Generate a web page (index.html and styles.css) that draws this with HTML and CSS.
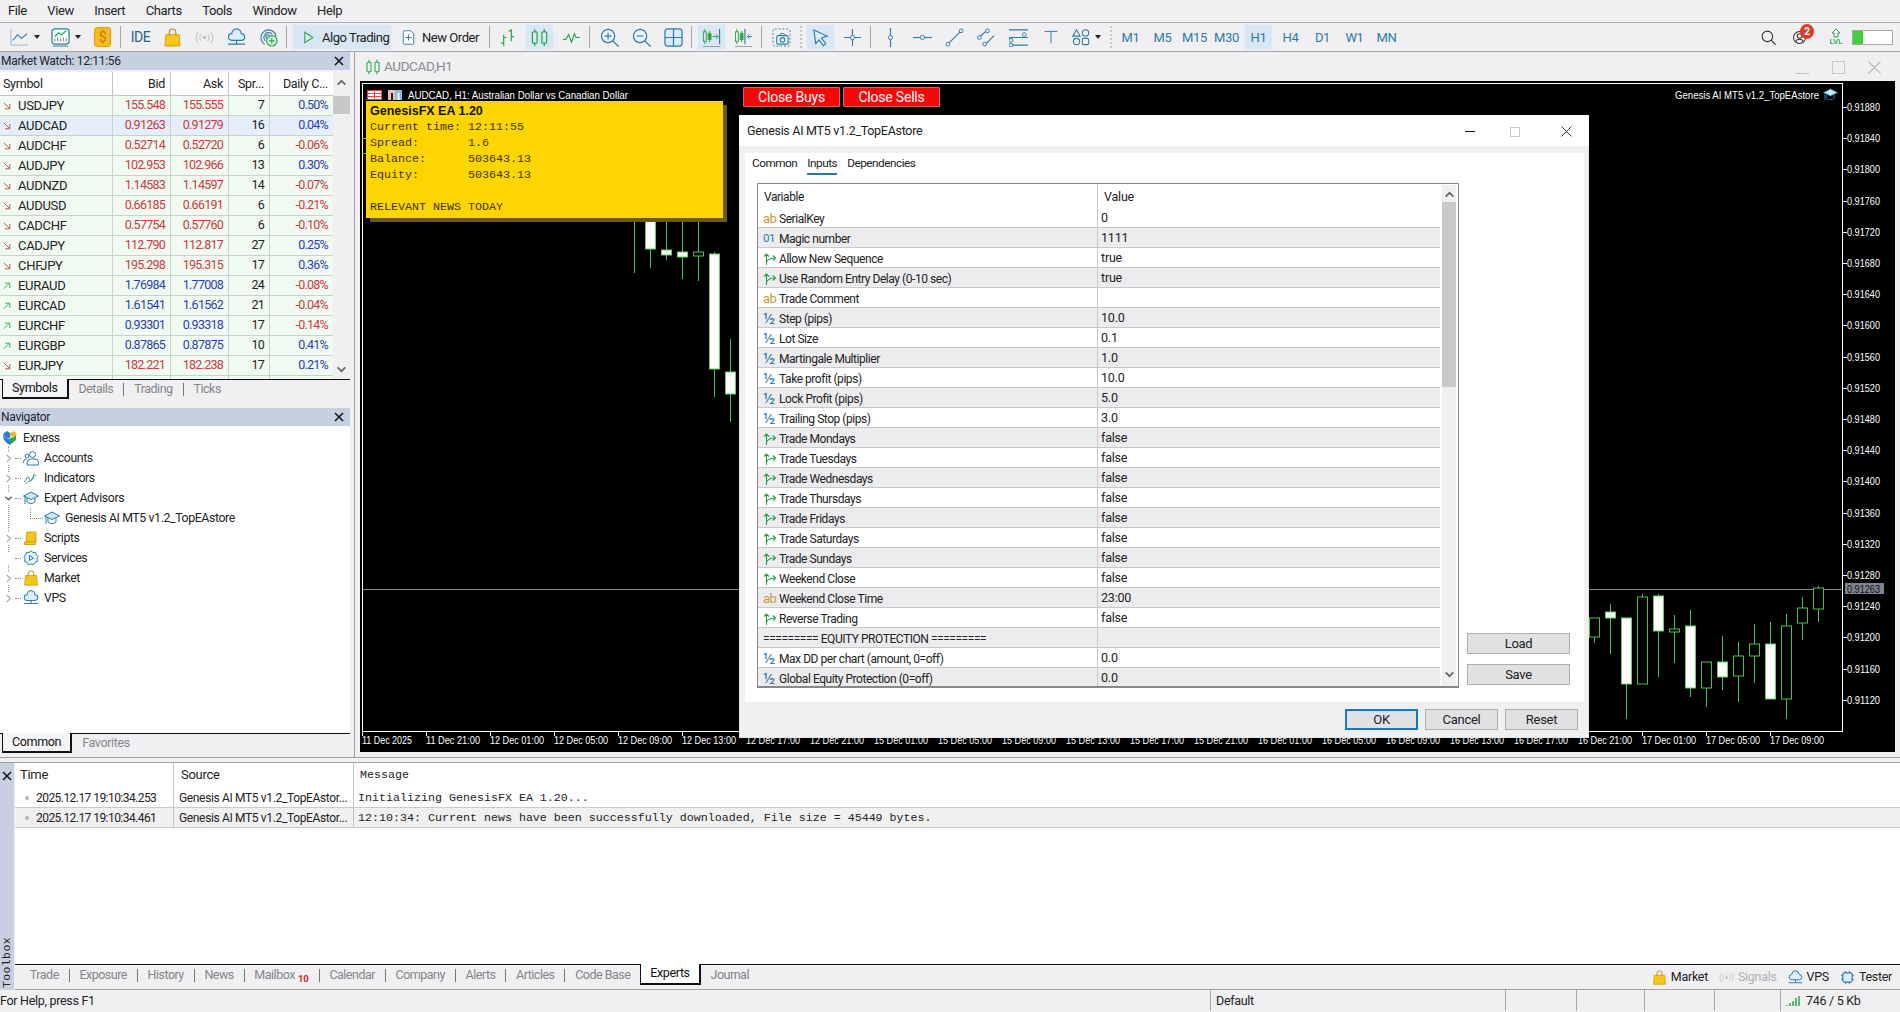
FILE: index.html
```
<!DOCTYPE html>
<html lang="en"><head><meta charset="utf-8"><title>MetaTrader 5</title><link rel="stylesheet" href="styles.css"></head>
<body>
<svg class="defs" xmlns="http://www.w3.org/2000/svg">
<symbol id="i-line" viewBox="0 0 20 20"><path d="M1 1v17h18" fill="none" stroke="#8fb7d0"/><path d="M3 13l5-6 4 4 6-5" fill="none" stroke="#3a86b0" stroke-width="1.2"/></symbol>
<symbol id="i-chart" viewBox="0 0 20 20"><rect x="1" y="1" width="18" height="16" rx="3" fill="#f4fafc" stroke="#2c7f9c" stroke-width="1.3"/><path d="M4 9l4-4 3 2 5-4" fill="none" stroke="#2aa84a" stroke-width="1.3"/><path d="M4 14v-3M7 14v-4M10 14v-3M13 14v-4M16 14v-3" stroke="#777"/><path d="M2 19h16" stroke="#2c7f9c"/></symbol>
<symbol id="i-bag" viewBox="0 0 20 20"><path d="M3 7h14l1 12H2z" fill="#f6c619" stroke="#d89f12"/><path d="M6.5 8V4.500a3.500 3.500 0 0 1 7 0V8" fill="none" stroke="#b98a16" stroke-width="1.2"/></symbol>
<symbol id="i-signal" viewBox="0 0 20 20"><circle cx="10" cy="10" r="1.700" fill="#bbb"/><path d="M6.500 6.500a5 5 0 0 0 0 7M13.500 6.500a5 5 0 0 1 0 7M3.500 4a9 9 0 0 0 0 12M16.500 4a9 9 0 0 1 0 12" fill="none" stroke="#bdbdbd"/></symbol>
<symbol id="i-cloud" viewBox="0 0 20 20"><path d="M5 13a3.500 3.500 0 0 1 0-7 5 5 0 0 1 10 0 3.500 3.500 0 0 1 0 7z" fill="#dcecf8" stroke="#2f7ba6" stroke-width="1.300"/><path d="M1 17h18M10 13v4" stroke="#2f7ba6" stroke-width="1.300"/></symbol>
<symbol id="i-globe" viewBox="0 0 20 20"><path d="M6 17A8 8 0 1 1 18 9M6.500 13.500A5 5 0 1 1 14 6.500M8.500 11a2 2 0 1 1 2.500-2.500" fill="none" stroke="#2f7ba6" stroke-width="1.200"/><circle cx="13.500" cy="13.500" r="5.500" fill="#d8f3dd" stroke="#2aa84a" stroke-width="1.200"/><path d="M13.500 10.500v6M10.500 13.500h6" stroke="#2aa84a" stroke-width="1.200"/></symbol>
<symbol id="i-play" viewBox="0 0 20 20"><path d="M5 3l11 7-11 7z" fill="none" stroke="#2aa84a" stroke-width="1.400"/></symbol>
<symbol id="i-order" viewBox="0 0 20 20"><path d="M5 1h8l4 4v12a2 2 0 0 1-2 2H5a2 2 0 0 1-2-2V3a2 2 0 0 1 2-2z" fill="#fff" stroke="#2f7ba6" stroke-width="1.200"/><path d="M10 6v8M6 10h8" stroke="#2f7ba6" stroke-width="1.300"/></symbol>
<symbol id="i-bars" viewBox="0 0 20 20"><path d="M6 7v12M3 16h3M6 10h3M14 1v13M11 3h3M14 9h3" fill="none" stroke="#2aa84a" stroke-width="1.300"/></symbol>
<symbol id="i-candle" viewBox="0 0 20 20"><path d="M5 1v3M5 16v3M15 1v3M15 16v3" stroke="#2aa84a" stroke-width="1.300"/><rect x="2.500" y="4" width="5" height="12" rx="1" fill="none" stroke="#2aa84a" stroke-width="1.300"/><rect x="12.500" y="4" width="5" height="12" rx="1" fill="none" stroke="#2aa84a" stroke-width="1.300"/></symbol>
<symbol id="i-wave" viewBox="0 0 20 20"><path d="M1 12h3l3-5 3 8 3-9 2 4h4" fill="none" stroke="#2aa84a" stroke-width="1.200"/></symbol>
<symbol id="i-zin" viewBox="0 0 20 20"><circle cx="8.500" cy="8.500" r="7" fill="#eaf4fb" stroke="#2f7ba6" stroke-width="1.300"/><path d="M13.500 13.500l6 6" stroke="#2f7ba6" stroke-width="1.300"/><path d="M8.500 5v7M5 8.500h7" stroke="#2f7ba6" stroke-width="1.200"/></symbol>
<symbol id="i-zout" viewBox="0 0 20 20"><circle cx="8.500" cy="8.500" r="7" fill="#eaf4fb" stroke="#2f7ba6" stroke-width="1.300"/><path d="M13.500 13.500l6 6" stroke="#2f7ba6" stroke-width="1.300"/><path d="M5 8.500h7" stroke="#2f7ba6" stroke-width="1.200"/></symbol>
<symbol id="i-grid" viewBox="0 0 20 20"><rect x="1" y="1" width="18" height="18" rx="3" fill="#dcecf8" stroke="#2f7ba6" stroke-width="1.300"/><path d="M10 1v18M1 10h18" stroke="#2f7ba6" stroke-width="1.300"/></symbol>
<symbol id="i-ascroll" viewBox="0 0 20 20"><path d="M3 1v3M3 14v3M8 3v3M8 12v3" stroke="#2aa84a"/><rect x="1.500" y="4" width="3" height="10" fill="none" stroke="#2aa84a"/><rect x="6.500" y="6" width="3" height="6" fill="#2aa84a" stroke="#2aa84a"/><path d="M11 9h6M14.500 6.500l2.500 2.500-2.500 2.500" fill="none" stroke="#2aa84a"/><path d="M18.500 1v16" stroke="#2f7ba6" stroke-width="1.200"/><path d="M1 19.500h18" stroke="#999"/></symbol>
<symbol id="i-shift" viewBox="0 0 20 20"><path d="M3 1v3M3 14v3M8 3v3M8 12v3" stroke="#2aa84a"/><rect x="1.500" y="4" width="3" height="10" fill="none" stroke="#2aa84a"/><rect x="6.500" y="6" width="3" height="6" fill="#2aa84a" stroke="#2aa84a"/><path d="M11.500 1v16" stroke="#2f7ba6" stroke-width="1.200"/><path d="M19 9h-5M16.500 6.500L14 9l2.500 2.500" fill="none" stroke="#2f7ba6"/><path d="M1 19.500h18" stroke="#999"/></symbol>
<symbol id="i-camera" viewBox="0 0 20 20"><rect x="1" y="1" width="18" height="18" rx="2" fill="none" stroke="#2f7ba6" stroke-dasharray="2 2"/><rect x="5" y="8" width="12" height="9" rx="1.500" fill="#eaf4fb" stroke="#2f7ba6" stroke-width="1.200"/><path d="M8 8l1-2h4l1 2" fill="none" stroke="#2f7ba6"/><circle cx="11" cy="12.500" r="2.300" fill="none" stroke="#2f7ba6" stroke-width="1.200"/></symbol>
<symbol id="i-cursor" viewBox="0 0 20 20"><path d="M3 2l14 6.500-6 2 4.500 6-2.500 2-4.500-6-3.500 4z" fill="#dcecf8" stroke="#2f7ba6" stroke-width="1.200"/></symbol>
<symbol id="i-cross" viewBox="0 0 20 20"><path d="M10 1v18M1 10h18" stroke="#2f7ba6" stroke-width="1.200"/><circle cx="10" cy="10" r="2.200" fill="#f0f0f3" stroke="#2f7ba6"/></symbol>
<symbol id="i-vline" viewBox="0 0 20 20"><path d="M10 0v20" stroke="#2f7ba6" stroke-width="1.200"/><circle cx="10" cy="10" r="2.200" fill="#f0f0f3" stroke="#2f7ba6"/></symbol>
<symbol id="i-hline" viewBox="0 0 20 20"><path d="M0 10h20" stroke="#2f7ba6" stroke-width="1.200"/><circle cx="10" cy="10" r="2.200" fill="#f0f0f3" stroke="#2f7ba6"/></symbol>
<symbol id="i-trend" viewBox="0 0 20 20"><path d="M3 17L17 3" stroke="#2f7ba6" stroke-width="1.200"/><circle cx="3" cy="17" r="2" fill="#f0f0f3" stroke="#2f7ba6"/><circle cx="17" cy="3" r="2" fill="#f0f0f3" stroke="#2f7ba6"/></symbol>
<symbol id="i-channel" viewBox="0 0 20 20"><path d="M2 10L11 2M8 18L18 8" stroke="#2f7ba6" stroke-width="1.200"/><circle cx="11" cy="3" r="2" fill="#f0f0f3" stroke="#2f7ba6"/><circle cx="2.500" cy="10" r="2" fill="#f0f0f3" stroke="#2f7ba6"/><circle cx="8" cy="17" r="2" fill="#f0f0f3" stroke="#2f7ba6"/></symbol>
<symbol id="i-fibo" viewBox="0 0 20 20"><path d="M0 2h20M0 10h20M0 18h20" stroke="#2f7ba6" stroke-width="1.200"/><circle cx="16" cy="7" r="2" fill="#f0f0f3" stroke="#2f7ba6"/><circle cx="2" cy="13" r="2" fill="#f0f0f3" stroke="#2f7ba6"/><circle cx="2" cy="18" r="2" fill="#f0f0f3" stroke="#2f7ba6"/></symbol>
<symbol id="i-t" viewBox="0 0 20 20"><path d="M2 3h16M10 3v15" stroke="#2f7ba6" stroke-width="1.200"/></symbol>
<symbol id="i-shapes" viewBox="0 0 20 20"><path d="M5 2l4 7H1z" fill="none" stroke="#2f7ba6" stroke-width="1.200"/><circle cx="15" cy="5.500" r="3.500" fill="none" stroke="#2f7ba6" stroke-width="1.200"/><circle cx="5" cy="15" r="3.500" fill="none" stroke="#2f7ba6" stroke-width="1.200"/><rect x="11.500" y="11.500" width="7" height="7" rx="1.500" fill="none" stroke="#2f7ba6" stroke-width="1.200"/></symbol>
<symbol id="i-search" viewBox="0 0 20 20"><circle cx="8.500" cy="8.500" r="7" fill="none" stroke="#333" stroke-width="1.500"/><path d="M13.500 13.500l6 6" stroke="#333" stroke-width="1.500"/></symbol>
<symbol id="i-acct" viewBox="0 0 20 20"><circle cx="10" cy="10" r="8" fill="none" stroke="#333" stroke-width="1.400"/><circle cx="10" cy="8" r="3" fill="none" stroke="#333" stroke-width="1.400"/><path d="M4.500 16a6 6 0 0 1 11 0" fill="none" stroke="#333" stroke-width="1.400"/></symbol>
<symbol id="i-close" viewBox="0 0 10 10"><path d="M1 1l8 8M9 1L1 9" stroke="#111" stroke-width="1.500"/></symbol>
<symbol id="i-thin-x" viewBox="0 0 12 12"><path d="M.5.500l11 11M11.500.500l-11 11" stroke="#222"/></symbol>
<symbol id="i-up" viewBox="0 0 10 10"><path d="M1.500 7L5 3.500 8.500 7" fill="none" stroke="#666" stroke-width="1.600"/></symbol>
<symbol id="i-down" viewBox="0 0 10 10"><path d="M1.500 3L5 6.500 8.500 3" fill="none" stroke="#666" stroke-width="1.600"/></symbol>
<symbol id="i-chev" viewBox="0 0 10 10"><path d="M3 1l4 4-4 4" fill="none" stroke="#aaa" stroke-width="1.400"/></symbol>
<symbol id="i-arr-dn" viewBox="0 0 10 10"><path d="M1 1l7 7M8.500 2.500v6h-6" fill="none" stroke="#c0403a" stroke-width="1.100"/></symbol>
<symbol id="i-arr-up" viewBox="0 0 10 10"><path d="M1 8.500l7-7M2.500 1.500h6v6" fill="none" stroke="#2aa84a" stroke-width="1.100"/></symbol>
<symbol id="i-bool" viewBox="0 0 14 14"><path d="M3.500 13V2M1 4.500L3.500 2 6 4.500M3.500 10C5 7 8 6 12.500 6M10 3.500L12.500 6 10 8.500" fill="none" stroke="#27a050" stroke-width="1.100"/></symbol>
<symbol id="i-people" viewBox="0 0 16 16"><circle cx="9.500" cy="4.500" r="3" fill="none" stroke="#2f7ba6"/><path d="M4 15v-2a4 4 0 0 1 4-4h4a3.500 3.500 0 0 1 3.500 3.500V15z" fill="none" stroke="#2f7ba6"/><circle cx="4" cy="6" r="2" fill="none" stroke="#2f7ba6"/><path d="M.5 13v-1a3 3 0 0 1 3-3" fill="none" stroke="#2f7ba6"/></symbol>
<symbol id="i-ind" viewBox="0 0 16 16"><path d="M1 12c2-1 2-5 4-5s1 5 3 4 2-7 4-7" fill="none" stroke="#2aa84a"/><path d="M3 14c2-3 3-2 5-4s3-2 6-6" fill="none" stroke="#2f7ba6" stroke-dasharray="2 1"/></symbol>
<symbol id="i-hat" viewBox="0 0 16 16"><path d="M8 2L15.500 6 8 9.500.5 6z" fill="#cfe5f3" stroke="#2f7ba6"/><path d="M4 8v4c2 2 6 2 8 0V8" fill="none" stroke="#2f7ba6"/><path d="M2 6.500V14" stroke="#2f7ba6"/></symbol>
<symbol id="i-script" viewBox="0 0 16 16"><path d="M4 2h9v10H3z" fill="#f6c619" stroke="#d89f12"/><path d="M1.500 12h11v2.500h-11z" fill="#f6c619" stroke="#d89f12"/></symbol>
<symbol id="i-gear" viewBox="0 0 16 16"><path d="M8 .800l2 1.700 2.600-.200.600 2.500 2 1.700L14 8.800l.4 2.600-2.400 1-1.300 2.200L8 14l-2.700.600L4 12.400l-2.400-1L2 8.800.800 6.500l2-1.700.600-2.500 2.600.200z" fill="#eaf4fb" stroke="#2f7ba6"/><path d="M6.500 5.500l4 2.500-4 2.500z" fill="none" stroke="#2f7ba6"/></symbol>
<symbol id="i-exness" viewBox="0 0 16 16"><path d="M1 4l4-3 3 2v5L4 8z" fill="#2b7bd6"/><path d="M8 3l4-2 3 3-3 3-4-1z" fill="#f5b91d"/><path d="M8 8l4-1 2-2v5l-6 5z" fill="#2ca84a"/><path d="M1 5l3 3 4 1v6c-4-2-7-5-7-10z" fill="#2b7bd6"/></symbol>
<symbol id="i-chip" viewBox="0 0 16 16"><rect x="3" y="3" width="10" height="10" rx="2" fill="#dcecf8" stroke="#2f7ba6" stroke-width="1.300"/><path d="M6 1v2M10 1v2M6 13v2M10 13v2M1 6h2M1 10h2M13 6h2M13 10h2" stroke="#2f7ba6"/></symbol>
</svg>

<nav class="menubar"><span>File</span><span>View</span><span>Insert</span><span>Charts</span><span>Tools</span><span>Window</span><span>Help</span></nav>

<div class="toolbar">
  <div class="group g-start">
    <div class="tool w38"><svg class="ic"><use href="#i-line"/></svg><i class="drop"></i></div>
    <div class="tool w38"><svg class="ic"><use href="#i-chart"/></svg><i class="drop"></i></div>
    <div class="tool"><span class="dollar">$</span></div>
  </div>
  <b class="sep"></b>
  <div class="group">
    <div class="tool ide">IDE</div>
    <div class="tool"><svg class="ic"><use href="#i-bag"/></svg></div>
    <div class="tool"><svg class="ic"><use href="#i-signal"/></svg></div>
    <div class="tool"><svg class="ic"><use href="#i-cloud"/></svg></div>
    <div class="tool"><svg class="ic"><use href="#i-globe"/></svg></div>
  </div>
  <b class="sep"></b>
  <div class="group">
    <div class="tool on wide algo"><svg class="ic s14"><use href="#i-play"/></svg><span>Algo Trading</span></div>
    <div class="tool wide order"><svg class="ic s14"><use href="#i-order"/></svg><span>New Order</span></div>
  </div>
  <b class="sep tight"></b>
  <div class="group">
    <div class="tool"><svg class="ic"><use href="#i-bars"/></svg></div>
    <div class="tool on"><svg class="ic"><use href="#i-candle"/></svg></div>
    <div class="tool"><svg class="ic"><use href="#i-wave"/></svg></div>
  </div>
  <b class="sep"></b>
  <div class="group">
    <div class="tool"><svg class="ic"><use href="#i-zin"/></svg></div>
    <div class="tool"><svg class="ic"><use href="#i-zout"/></svg></div>
    <div class="tool"><svg class="ic"><use href="#i-grid"/></svg></div>
  </div>
  <b class="sep"></b>
  <div class="group">
    <div class="tool on"><svg class="ic"><use href="#i-ascroll"/></svg></div>
    <div class="tool"><svg class="ic"><use href="#i-shift"/></svg></div>
  </div>
  <b class="sep"></b>
  <div class="group">
    <div class="tool"><svg class="ic"><use href="#i-camera"/></svg></div>
  </div>
  <b class="sep dotted"></b>
  <div class="group">
    <div class="tool on"><svg class="ic"><use href="#i-cursor"/></svg></div>
    <div class="tool"><svg class="ic"><use href="#i-cross"/></svg></div>
  </div>
  <b class="sep"></b>
  <div class="group">
    <div class="tool"><svg class="ic"><use href="#i-vline"/></svg></div>
    <div class="tool"><svg class="ic"><use href="#i-hline"/></svg></div>
    <div class="tool"><svg class="ic"><use href="#i-trend"/></svg></div>
    <div class="tool"><svg class="ic"><use href="#i-channel"/></svg></div>
    <div class="tool"><svg class="ic"><use href="#i-fibo"/></svg></div>
    <div class="tool"><svg class="ic s16"><use href="#i-t"/></svg></div>
    <div class="tool w38"><svg class="ic s18"><use href="#i-shapes"/></svg><i class="drop"></i></div>
  </div>
  <b class="sep dotted"></b>
  <div class="group periods">
    <div class="tool">M1</div><div class="tool">M5</div><div class="tool">M15</div><div class="tool">M30</div><div class="tool on">H1</div><div class="tool">H4</div><div class="tool">D1</div><div class="tool">W1</div><div class="tool">MN</div>
  </div>
  <div class="tb-right">
    <svg class="ic s15 srch"><use href="#i-search"/></svg>
    <span class="acct"><svg class="ic s15"><use href="#i-acct"/></svg><em class="badge">2</em></span>
    <span class="lvl"><svg class="lvl-a" viewBox="0 0 10 10"><path d="M5 1l4 4H7v4H3V5H1z" fill="none" stroke="#2aa84a"/></svg><small>LVL</small></span>
    <span class="lvlbar"><i></i></span>
  </div>
</div>

<main class="main">
  <aside class="left">
    <section class="mw">
      <header class="pane-title"><span>Market Watch: 12:11:56</span><svg class="x"><use href="#i-close"/></svg></header>
      <div class="mw-body">
        <div class="mw-table">
          <div class="mrow head"><span class="sym">Symbol</span><span>Bid</span><span>Ask</span><span>Spr...</span><span>Daily C...</span></div>
          <div class="mrow"><span class="sym"><svg class="arr"><use href="#i-arr-dn"/></svg>USDJPY</span><span class="dn">155.548</span><span class="dn">155.555</span><span>7</span><span class="blue">0.50%</span></div>
          <div class="mrow sel"><span class="sym"><svg class="arr"><use href="#i-arr-dn"/></svg>AUDCAD</span><span class="dn">0.91263</span><span class="dn">0.91279</span><span>16</span><span class="blue">0.04%</span></div>
          <div class="mrow"><span class="sym"><svg class="arr"><use href="#i-arr-dn"/></svg>AUDCHF</span><span class="dn">0.52714</span><span class="dn">0.52720</span><span>6</span><span class="dn">-0.06%</span></div>
          <div class="mrow"><span class="sym"><svg class="arr"><use href="#i-arr-dn"/></svg>AUDJPY</span><span class="dn">102.953</span><span class="dn">102.966</span><span>13</span><span class="blue">0.30%</span></div>
          <div class="mrow"><span class="sym"><svg class="arr"><use href="#i-arr-dn"/></svg>AUDNZD</span><span class="dn">1.14583</span><span class="dn">1.14597</span><span>14</span><span class="dn">-0.07%</span></div>
          <div class="mrow"><span class="sym"><svg class="arr"><use href="#i-arr-dn"/></svg>AUDUSD</span><span class="dn">0.66185</span><span class="dn">0.66191</span><span>6</span><span class="dn">-0.21%</span></div>
          <div class="mrow"><span class="sym"><svg class="arr"><use href="#i-arr-dn"/></svg>CADCHF</span><span class="dn">0.57754</span><span class="dn">0.57760</span><span>6</span><span class="dn">-0.10%</span></div>
          <div class="mrow"><span class="sym"><svg class="arr"><use href="#i-arr-dn"/></svg>CADJPY</span><span class="dn">112.790</span><span class="dn">112.817</span><span>27</span><span class="blue">0.25%</span></div>
          <div class="mrow"><span class="sym"><svg class="arr"><use href="#i-arr-dn"/></svg>CHFJPY</span><span class="dn">195.298</span><span class="dn">195.315</span><span>17</span><span class="blue">0.36%</span></div>
          <div class="mrow"><span class="sym"><svg class="arr"><use href="#i-arr-up"/></svg>EURAUD</span><span class="blue">1.76984</span><span class="blue">1.77008</span><span>24</span><span class="dn">-0.08%</span></div>
          <div class="mrow"><span class="sym"><svg class="arr"><use href="#i-arr-up"/></svg>EURCAD</span><span class="blue">1.61541</span><span class="blue">1.61562</span><span>21</span><span class="dn">-0.04%</span></div>
          <div class="mrow"><span class="sym"><svg class="arr"><use href="#i-arr-up"/></svg>EURCHF</span><span class="blue">0.93301</span><span class="blue">0.93318</span><span>17</span><span class="dn">-0.14%</span></div>
          <div class="mrow"><span class="sym"><svg class="arr"><use href="#i-arr-up"/></svg>EURGBP</span><span class="blue">0.87865</span><span class="blue">0.87875</span><span>10</span><span class="blue">0.41%</span></div>
          <div class="mrow"><span class="sym"><svg class="arr"><use href="#i-arr-dn"/></svg>EURJPY</span><span class="dn">182.221</span><span class="dn">182.238</span><span>17</span><span class="blue">0.21%</span></div>
          <div class="mrow tail"><span></span><span></span><span></span><span></span><span></span></div>
        </div>
        <div class="mw-scroll"><svg class="chev"><use href="#i-up"/></svg><i class="thumb"></i><svg class="chev end"><use href="#i-down"/></svg></div>
      </div>
      <div class="tabs"><span class="tab on">Symbols</span><span class="tab bar">Details</span><span class="tab bar">Trading</span><span class="tab">Ticks</span></div>
    </section>
    <section class="nav">
      <header class="pane-title"><span>Navigator</span><svg class="x"><use href="#i-close"/></svg></header>
      <ul class="tree">
        <li class="root"><svg class="ni"><use href="#i-exness"/></svg>Exness</li>
        <li><svg class="tw"><use href="#i-chev"/></svg><i class="dots"></i><svg class="ni"><use href="#i-people"/></svg>Accounts</li>
        <li><svg class="tw"><use href="#i-chev"/></svg><i class="dots"></i><svg class="ni"><use href="#i-ind"/></svg>Indicators</li>
        <li><svg class="tw"><use href="#i-down"/></svg><i class="dots"></i><svg class="ni"><use href="#i-hat"/></svg>Expert Advisors</li>
        <li class="child"><i class="elbow"></i><svg class="ni"><use href="#i-hat"/></svg>Genesis AI MT5 v1.2_TopEAstore</li>
        <li><svg class="tw"><use href="#i-chev"/></svg><i class="dots"></i><svg class="ni"><use href="#i-script"/></svg>Scripts</li>
        <li><span class="tw"></span><i class="dots"></i><svg class="ni"><use href="#i-gear"/></svg>Services</li>
        <li><svg class="tw"><use href="#i-chev"/></svg><i class="dots"></i><svg class="ni"><use href="#i-bag"/></svg>Market</li>
        <li><svg class="tw"><use href="#i-chev"/></svg><i class="dots"></i><svg class="ni"><use href="#i-cloud"/></svg>VPS</li>
      </ul>
      <div class="tabs"><span class="tab on">Common</span><span class="tab">Favorites</span></div>
    </section>
  </aside>

  <section class="mdi">
    <header class="mdi-tab">
      <svg class="ic s16"><use href="#i-candle"/></svg><span class="mdi-name">AUDCAD,H1</span>
      <div class="winbtns"><i class="w-min"></i><i class="w-max"></i><svg class="w-x"><use href="#i-thin-x"/></svg></div>
    </header>
    <div class="chart">
      <svg class="plot" width="1535" height="671" viewBox="360 81 1535 671">
        <rect class="frame" x="362.500" y="83.500" width="1480" height="648"/>
        <path class="priceline" d="M363 589.500H1843"/>
        <path class="wick" d="M410.500 218v4M362 138.500h4M362 153.500h4M634.500 218V273M650.500 218V268M666.500 218V260M682.500 218V279M698.500 218V281M714.500 252V397M730.500 339V422M1594.500 618V643M1610.500 604V654M1626.500 684V719M1642.500 594V597M1658.500 594V677M1674.500 615V663M1690.500 610V697M1706.500 688V707M1722.500 636V690M1738.500 642V702M1754.500 624V683M1770.500 622V644M1786.500 614V719M1802.500 597V640M1818.500 586V622"/>
        <g class="bear">
          <rect x="645.500" y="218" width="10" height="31"/><rect x="661.500" y="250" width="10" height="5"/><rect x="677.500" y="252" width="10" height="5"/><rect x="709.500" y="254" width="10" height="115"/><rect x="725.500" y="372" width="10" height="22"/>
          <rect x="1605.500" y="612" width="10" height="6"/><rect x="1621.500" y="618" width="10" height="66"/><rect x="1653.500" y="596" width="10" height="35"/><rect x="1685.500" y="626" width="10" height="62"/><rect x="1717.500" y="662" width="10" height="15"/><rect x="1765.500" y="644" width="10" height="55"/>
        </g>
        <g class="bull">
          <rect x="693.500" y="252" width="10" height="4"/><rect x="1589.500" y="618" width="10" height="19"/><rect x="1637.500" y="597" width="10" height="87"/><rect x="1669.500" y="629" width="10" height="3"/><rect x="1701.500" y="662" width="10" height="26"/><rect x="1733.500" y="656" width="10" height="20"/><rect x="1749.500" y="644" width="10" height="12"/><rect x="1781.500" y="626" width="10" height="73"/><rect x="1797.500" y="608" width="10" height="15"/><rect x="1813.500" y="588" width="10" height="21"/>
        </g>
        <path class="tick" d="M1843 107.500h4M1843 138.500h4M1843 169.500h4M1843 201.500h4M1843 232.500h4M1843 263.500h4M1843 294.500h4M1843 325.500h4M1843 357.500h4M1843 388.500h4M1843 419.500h4M1843 450.500h4M1843 481.500h4M1843 513.500h4M1843 544.500h4M1843 575.500h4M1843 606.500h4M1843 637.500h4M1843 669.500h4M1843 700.500h4"/>
        <path class="tick" d="M362.500 731v5M426.500 731v5M490.500 731v5M554.500 731v5M618.500 731v5M682.500 731v5M746.500 731v5M810.500 731v5M874.500 731v5M938.500 731v5M1002.500 731v5M1066.500 731v5M1130.500 731v5M1194.500 731v5M1258.500 731v5M1322.500 731v5M1386.500 731v5M1450.500 731v5M1514.500 731v5M1578.500 731v5M1642.500 731v5M1706.500 731v5M1770.500 731v5"/>
        <g class="lbl">
          <text x="1847" y="111" textLength="33" lengthAdjust="spacingAndGlyphs">0.91880</text><text x="1847" y="142" textLength="33" lengthAdjust="spacingAndGlyphs">0.91840</text><text x="1847" y="173" textLength="33" lengthAdjust="spacingAndGlyphs">0.91800</text><text x="1847" y="205" textLength="33" lengthAdjust="spacingAndGlyphs">0.91760</text><text x="1847" y="236" textLength="33" lengthAdjust="spacingAndGlyphs">0.91720</text><text x="1847" y="267" textLength="33" lengthAdjust="spacingAndGlyphs">0.91680</text><text x="1847" y="298" textLength="33" lengthAdjust="spacingAndGlyphs">0.91640</text><text x="1847" y="329" textLength="33" lengthAdjust="spacingAndGlyphs">0.91600</text><text x="1847" y="361" textLength="33" lengthAdjust="spacingAndGlyphs">0.91560</text><text x="1847" y="392" textLength="33" lengthAdjust="spacingAndGlyphs">0.91520</text><text x="1847" y="423" textLength="33" lengthAdjust="spacingAndGlyphs">0.91480</text><text x="1847" y="454" textLength="33" lengthAdjust="spacingAndGlyphs">0.91440</text><text x="1847" y="485" textLength="33" lengthAdjust="spacingAndGlyphs">0.91400</text><text x="1847" y="517" textLength="33" lengthAdjust="spacingAndGlyphs">0.91360</text><text x="1847" y="548" textLength="33" lengthAdjust="spacingAndGlyphs">0.91320</text><text x="1847" y="579" textLength="33" lengthAdjust="spacingAndGlyphs">0.91280</text><text x="1847" y="610" textLength="33" lengthAdjust="spacingAndGlyphs">0.91240</text><text x="1847" y="641" textLength="33" lengthAdjust="spacingAndGlyphs">0.91200</text><text x="1847" y="673" textLength="33" lengthAdjust="spacingAndGlyphs">0.91160</text><text x="1847" y="704" textLength="33" lengthAdjust="spacingAndGlyphs">0.91120</text>
        </g>
        <rect class="pricebox" x="1845" y="583" width="39" height="11"/>
        <text class="lbl-cur" x="1847" y="593" textLength="33" lengthAdjust="spacingAndGlyphs">0.91263</text>
        <g class="lbl">
          <text x="362" y="744" textLength="50" lengthAdjust="spacingAndGlyphs">11 Dec 2025</text><text x="426" y="744" textLength="54" lengthAdjust="spacingAndGlyphs">11 Dec 21:00</text><text x="490" y="744" textLength="54" lengthAdjust="spacingAndGlyphs">12 Dec 01:00</text><text x="554" y="744" textLength="54" lengthAdjust="spacingAndGlyphs">12 Dec 05:00</text><text x="618" y="744" textLength="54" lengthAdjust="spacingAndGlyphs">12 Dec 09:00</text><text x="682" y="744" textLength="54" lengthAdjust="spacingAndGlyphs">12 Dec 13:00</text><text x="746" y="744" textLength="54" lengthAdjust="spacingAndGlyphs">12 Dec 17:00</text><text x="810" y="744" textLength="54" lengthAdjust="spacingAndGlyphs">12 Dec 21:00</text><text x="874" y="744" textLength="54" lengthAdjust="spacingAndGlyphs">15 Dec 01:00</text><text x="938" y="744" textLength="54" lengthAdjust="spacingAndGlyphs">15 Dec 05:00</text><text x="1002" y="744" textLength="54" lengthAdjust="spacingAndGlyphs">15 Dec 09:00</text><text x="1066" y="744" textLength="54" lengthAdjust="spacingAndGlyphs">15 Dec 13:00</text><text x="1130" y="744" textLength="54" lengthAdjust="spacingAndGlyphs">15 Dec 17:00</text><text x="1194" y="744" textLength="54" lengthAdjust="spacingAndGlyphs">15 Dec 21:00</text><text x="1258" y="744" textLength="54" lengthAdjust="spacingAndGlyphs">16 Dec 01:00</text><text x="1322" y="744" textLength="54" lengthAdjust="spacingAndGlyphs">16 Dec 05:00</text><text x="1386" y="744" textLength="54" lengthAdjust="spacingAndGlyphs">16 Dec 09:00</text><text x="1450" y="744" textLength="54" lengthAdjust="spacingAndGlyphs">16 Dec 13:00</text><text x="1514" y="744" textLength="54" lengthAdjust="spacingAndGlyphs">16 Dec 17:00</text><text x="1578" y="744" textLength="54" lengthAdjust="spacingAndGlyphs">16 Dec 21:00</text><text x="1642" y="744" textLength="54" lengthAdjust="spacingAndGlyphs">17 Dec 01:00</text><text x="1706" y="744" textLength="54" lengthAdjust="spacingAndGlyphs">17 Dec 05:00</text><text x="1770" y="744" textLength="54" lengthAdjust="spacingAndGlyphs">17 Dec 09:00</text>
          <text x="408" y="99" textLength="220" lengthAdjust="spacingAndGlyphs">AUDCAD, H1:  Australian Dollar vs Canadian Dollar</text>
          <text x="1675" y="99" textLength="144" lengthAdjust="spacingAndGlyphs">Genesis AI MT5 v1.2_TopEAstore</text>
        </g>
        <g class="legend">
          <rect x="367.500" y="90.500" width="14" height="9" fill="#fff" stroke="#e04848"/><path d="M367 93.500h15M367 96.500h15" stroke="#e04848"/><path d="M374.500 90v10" stroke="#e04848"/>
          <rect x="388" y="90" width="7" height="10" fill="#f3b8b8"/><rect x="395" y="90" width="7" height="10" fill="#7cc0ea"/><rect x="391" y="93" width="2" height="7" fill="#222"/><rect x="397.500" y="93" width="2" height="7" fill="#fff"/>
        </g>
        <svg x="1823" y="87" width="15" height="15" viewBox="0 0 16 16"><use href="#i-hat"/></svg>
      </svg>

      <aside class="ea-panel">
        <div class="ea-title">GenesisFX EA 1.20</div>
        <div class="ea-line">Current time: 12:11:55</div>
        <div class="ea-line">Spread:       1.6</div>
        <div class="ea-line">Balance:      503643.13</div>
        <div class="ea-line">Equity:       503643.13</div>
        <div class="ea-line">&nbsp;</div>
        <div class="ea-line">RELEVANT NEWS TODAY</div>
      </aside>
      <div class="closers"><button class="red">Close Buys</button><button class="red">Close Sells</button></div>

      <div class="dialog">
        <header class="dlg-title"><span>Genesis AI MT5 v1.2_TopEAstore</span>
          <div class="dlg-win"><i class="d-min"></i><i class="d-max"></i><svg class="d-x"><use href="#i-thin-x"/></svg></div>
        </header>
        <div class="dlg-panel">
          <div class="dlg-tabs"><span>Common</span><span class="cur">Inputs</span><span>Dependencies</span></div>
          <div class="dlg-body">
            <div class="grid">
              <div class="grid-rows">
                <div class="grow ghead"><span>Variable</span><span>Value</span></div>
                <div class="grow"><span><em class="t-s">ab</em>SerialKey</span><span>0</span></div>
                <div class="grow"><span><em class="t-i">01</em>Magic number</span><span>1111</span></div>
                <div class="grow"><span><svg class="t-b"><use href="#i-bool"/></svg>Allow New Sequence</span><span>true</span></div>
                <div class="grow"><span><svg class="t-b"><use href="#i-bool"/></svg>Use Random Entry Delay (0-10 sec)</span><span>true</span></div>
                <div class="grow"><span><em class="t-s">ab</em>Trade Comment</span><span></span></div>
                <div class="grow"><span><em class="t-d">½</em>Step (pips)</span><span>10.0</span></div>
                <div class="grow"><span><em class="t-d">½</em>Lot Size</span><span>0.1</span></div>
                <div class="grow"><span><em class="t-d">½</em>Martingale Multiplier</span><span>1.0</span></div>
                <div class="grow"><span><em class="t-d">½</em>Take profit (pips)</span><span>10.0</span></div>
                <div class="grow"><span><em class="t-d">½</em>Lock Profit (pips)</span><span>5.0</span></div>
                <div class="grow"><span><em class="t-d">½</em>Trailing Stop (pips)</span><span>3.0</span></div>
                <div class="grow"><span><svg class="t-b"><use href="#i-bool"/></svg>Trade Mondays</span><span>false</span></div>
                <div class="grow"><span><svg class="t-b"><use href="#i-bool"/></svg>Trade Tuesdays</span><span>false</span></div>
                <div class="grow"><span><svg class="t-b"><use href="#i-bool"/></svg>Trade Wednesdays</span><span>false</span></div>
                <div class="grow"><span><svg class="t-b"><use href="#i-bool"/></svg>Trade Thursdays</span><span>false</span></div>
                <div class="grow"><span><svg class="t-b"><use href="#i-bool"/></svg>Trade Fridays</span><span>false</span></div>
                <div class="grow"><span><svg class="t-b"><use href="#i-bool"/></svg>Trade Saturdays</span><span>false</span></div>
                <div class="grow"><span><svg class="t-b"><use href="#i-bool"/></svg>Trade Sundays</span><span>false</span></div>
                <div class="grow"><span><svg class="t-b"><use href="#i-bool"/></svg>Weekend Close</span><span>false</span></div>
                <div class="grow"><span><em class="t-s">ab</em>Weekend Close Time</span><span>23:00</span></div>
                <div class="grow"><span><svg class="t-b"><use href="#i-bool"/></svg>Reverse Trading</span><span>false</span></div>
                <div class="grow plain"><span>========= EQUITY PROTECTION =========</span><span></span></div>
                <div class="grow"><span><em class="t-d">½</em>Max DD per chart (amount, 0=off)</span><span>0.0</span></div>
                <div class="grow"><span><em class="t-d">½</em>Global Equity Protection (0=off)</span><span>0.0</span></div>
              </div>
              <div class="grid-scroll"><svg class="chev"><use href="#i-up"/></svg><i class="gthumb"></i><svg class="chev end"><use href="#i-down"/></svg></div>
            </div>
            <div class="side-btns"><button class="btn">Load</button><button class="btn">Save</button></div>
          </div>
        </div>
        <footer class="dlg-foot"><button class="btn ok">OK</button><button class="btn">Cancel</button><button class="btn">Reset</button></footer>
      </div>
    </div>
  </section>
</main>

<section class="toolbox">
  <div class="tb-strip"><svg class="x"><use href="#i-close"/></svg><span class="tb-label">Toolbox</span></div>
  <div class="tb-main">
    <div class="log">
      <div class="lrow lhead"><span class="c-time">Time</span><span class="c-src">Source</span><span class="c-msg">Message</span></div>
      <div class="lrow"><span class="c-time"><i class="dot"></i>2025.12.17 19:10:34.253</span><span class="c-src">Genesis AI MT5 v1.2_TopEAstor...</span><span class="c-msg">Initializing GenesisFX EA 1.20...</span></div>
      <div class="lrow alt"><span class="c-time"><i class="dot"></i>2025.12.17 19:10:34.461</span><span class="c-src">Genesis AI MT5 v1.2_TopEAstor...</span><span class="c-msg">12:10:34: Current news have been successfully downloaded, File size = 45449 bytes.</span></div>
    </div>
    <div class="tabs wide-tabs">
      <span class="tab bar">Trade</span><span class="tab bar">Exposure</span><span class="tab bar">History</span><span class="tab bar">News</span><span class="tab bar mail">Mailbox<sub>10</sub></span><span class="tab bar">Calendar</span><span class="tab bar">Company</span><span class="tab bar">Alerts</span><span class="tab bar">Articles</span><span class="tab">Code Base</span><span class="tab on">Experts</span><span class="tab">Journal</span>
      <div class="services">
        <span><svg class="si"><use href="#i-bag"/></svg>Market</span>
        <span class="off"><svg class="si"><use href="#i-signal"/></svg>Signals</span>
        <span><svg class="si"><use href="#i-cloud"/></svg>VPS</span>
        <span><svg class="si"><use href="#i-chip"/></svg>Tester</span>
      </div>
    </div>
  </div>
</section>

<footer class="status">
  <span class="st help">For Help, press F1</span>
  <span class="st st-default">Default</span>
  <span class="st st-a"></span><span class="st st-b"></span><span class="st st-c"></span><span class="st st-d"></span>
  <span class="st st-net"><svg class="netbars" viewBox="0 0 14 12"><path d="M1 11v-1M4 11V8M7 11V6M10 11V3M13 11V1" stroke="#2aa84a" stroke-width="1.500"/></svg>746 / 5 Kb</span>
</footer>
</body></html>
```
FILE: styles.css
```
*{box-sizing:border-box}
html,body{margin:0;height:100%}
body{width:1900px;height:1012px;overflow:hidden;display:flex;flex-direction:column;background:#f0f0f3;color:#222;font:12px/1 Roboto,"Liberation Sans",sans-serif;letter-spacing:-.3px}
.defs{position:absolute;width:0;height:0}
svg{display:block;flex:none}
i,em{font-style:normal;display:block}
button{font:inherit;letter-spacing:inherit;color:inherit;padding:0;cursor:default}

.menubar{height:22px;flex:none;display:flex;align-items:center;gap:20.5px;padding:0 0 2px 8px;font-size:13px;letter-spacing:-.4px}

.toolbar{height:30px;flex:none;display:flex;align-items:stretch;padding:1px 0 1px 6px;border-top:1px solid #adadb0;border-bottom:1px solid #a5a5a8;color:#2f7ba6}
.group{display:flex;gap:3px}
.tool{width:29px;display:flex;align-items:center;justify-content:center}
.w38{width:38px;gap:5px;justify-content:flex-start;padding-left:4px}
.on{background:#d9e6f3;border:1px solid #e6eef7}
.ic{width:19px;height:19px}
.s14{width:15px;height:15px}
.s15{width:15px;height:15px}
.s16{width:16px;height:16px}
.s18{width:18px;height:18px}
.drop{width:0;height:0;border:3.500px solid transparent;border-top:4px solid #222;border-bottom:0}
.dollar{width:17px;height:20px;border-radius:3px;background:#f7bb1c;border:1px solid #e3a012;color:#c97a10;font-size:14px;display:flex;align-items:center;justify-content:center}
.sep{width:1px;margin:2px 5px 2px 3px;background:#a8a8ac}
.sep.tight{margin-right:3px}
.sep.dotted{background:none;border-left:2px dotted #c4c4c8;margin:2px 4px 2px 4px;width:2px}
.ide{font-size:14px;letter-spacing:-.5px;color:#2b5f86}
.wide{justify-content:flex-start;gap:6px;color:#222;font-size:13px;white-space:nowrap;letter-spacing:-.45px}
.algo{width:100px;padding-left:8px}
.order{width:91px;padding-left:6px}
.periods{gap:3px;font-size:13px;letter-spacing:-.4px}
.tb-right{margin-left:auto;display:flex;align-items:center;padding-right:7px;gap:0}
.srch{margin-right:16px}
.acct{position:relative;width:32px}
.badge{position:absolute;left:8px;top:-6px;width:14px;height:15px;border-radius:50%;background:#e33a26;color:#fff;font-size:10px;font-weight:700;line-height:15px;text-align:center;letter-spacing:0}
.lvl{display:flex;flex-direction:column;align-items:center;width:24px;color:#2aa84a;margin-right:4px}
.lvl-a{width:10px;height:10px}
.lvl small{font-size:8px;letter-spacing:0;font-weight:500}
.lvlbar{width:41px;height:15px;border:1px solid #a8a8a8;background:#fff;display:block}
.lvlbar i{width:10px;height:100%;background:#3ed13e}

.main{height:706px;flex:none;display:flex;border-bottom:1px solid #a0a0a3}
.left{width:354px;flex:none;display:flex;flex-direction:column}
.pane-title{height:18px;flex:none;display:flex;align-items:center;justify-content:space-between;padding:0 6px 0 1px;background:#c5d1e0;width:350px;color:#1d2530}
.x{width:10px;height:10px}
.mw{width:350px}
.mw-body{display:flex;height:307px;margin-top:2px;overflow:hidden}
.mw-table{width:333px;flex:none}
.mrow{display:grid;grid-template-columns:113px 58px 58px 41px 63px;height:20px;background:#f1faf1}
.mrow>span{display:flex;align-items:center;justify-content:flex-end;padding-right:5px;border-right:1px solid #c8d2c8;border-bottom:1px solid #c8d2c8;letter-spacing:-.75px;font-size:12.500px}
.mrow>.sym{justify-content:flex-start;padding-left:18px;position:relative;font-size:13px;letter-spacing:-.3px}
.mrow>span:last-child{border-right:0}
.mrow.head{height:24px;background:#fff}
.mrow.head>span{font-size:12.500px;letter-spacing:-.3px;border-color:#c4c4c4;padding-top:2px}
.mrow.head>.sym{padding-left:3px}
.mrow.sel{background:#e4effb}
.mrow.tail{height:6px}
.arr{position:absolute;left:3px;top:6px;width:8px;height:8px}
.dn{color:#c83a40}
.blue{color:#2a3fb4}
.mw-scroll{flex:1;display:flex;flex-direction:column;align-items:center;position:relative}
.chev{width:11px;height:11px;margin:5px 0 9px}
.chev.end{position:absolute;bottom:4px;margin:0}
.thumb{width:100%;height:18px;margin:-1px 0;background:#c8c8cb}

.tabs{display:flex;align-items:center;height:19px;border-top:1px solid #111;color:#858589;font-size:12.500px;letter-spacing:-.5px}
.mw .tabs{padding-left:2px}
.tab{padding:0 10px;display:flex;align-items:center;height:13px;position:relative;white-space:nowrap}
.tab.bar{border-right:1px solid #777}
.tab.on{height:20px;margin-top:-1px;padding:0 9px;color:#111;border:1px solid #111;border-top:0;border-right-width:2px;border-bottom-width:2px;align-self:flex-start;background:#f5f5f7;letter-spacing:-.35px}
.nav{width:350px;margin-top:10px;flex:1;display:flex;flex-direction:column}
.tree{list-style:none;margin:0;padding:2px 0 0;height:307px;flex:none;background:#fff;position:relative;font-size:12.300px;letter-spacing:-.38px}
.tree::before{content:"";position:absolute;left:8px;top:20px;height:150px;border-left:1px dotted #9a9a9a}
.tree li{height:20px;display:flex;align-items:center;padding-left:4px;position:relative}
.tree .root{padding-left:2px}
.tw{width:9px;height:11px;flex:none;background:#fff;position:relative}
.dots{width:6px;border-top:1px dotted #8a8a8a;margin:0 2px}
.ni{width:16px;height:16px;margin-right:5px}
.tree .child{padding-left:30px}
.elbow{width:13px;height:11px;border-left:1px dotted #8a8a8a;border-bottom:1px dotted #8a8a8a;margin:-10px 1px 0 0}
.nav .tabs{padding-left:2px;height:20px;letter-spacing:-.35px}

.mdi{flex:1;border-left:1px solid #a0a0a3;position:relative;min-width:0}
.mdi-tab{height:29px;display:flex;align-items:center;padding:1px 0 0 10px;position:relative}
.mdi-name{margin-left:3px;color:#8a8a8e;font-size:13.500px;letter-spacing:-.4px}
.winbtns{margin-left:auto;display:flex;align-items:center;gap:23px;padding-right:19px}
.w-min{width:13px;height:1px;background:#c0c0c4;margin-top:12px}
.w-max{width:13px;height:13px;border:1px solid #c8c8cc}
.w-x{width:13px;height:13px;opacity:.3}
.chart{position:relative;margin-left:5px;width:1535px;height:671px;background:#000}
.plot{background:#000}
.frame{fill:none;stroke:#fff}
.priceline{stroke:#8b8b8b}
.wick{stroke:#4cc24c;fill:none}
.bear rect{fill:#fff;stroke:#62d062}
.bull rect{fill:#000;stroke:#4cc24c}
.tick{stroke:#fff}
.lbl text{fill:#fff;font:11px "Liberation Sans",sans-serif;letter-spacing:0}
.pricebox{fill:#7d8390}
.lbl-cur{fill:#111;font:11px "Liberation Sans",sans-serif;letter-spacing:0}

.ea-panel{position:absolute;left:6px;top:20px;width:357px;height:117px;background:#fdd503;box-shadow:4px 4px 0 #6c5a12;padding:3px 4px;color:#3b3000}
.ea-title{font:700 12.500px/14px "Liberation Sans",sans-serif;letter-spacing:0;color:#111;height:15px}
.ea-line{font:11.670px/16px "Liberation Mono",monospace;letter-spacing:0;white-space:pre;height:16px}
.closers{position:absolute;left:383px;top:6px;display:flex;gap:3px}
.red{width:97px;height:20px;background:#f60808;color:#fff;border:1px solid #c76a6a;font-size:14px;letter-spacing:-.2px;border-radius:1px}

.dialog{position:absolute;left:379px;top:34px;width:850px;height:623px;background:#f0f0f3;display:flex;flex-direction:column;box-shadow:0 0 0 1px #e8e8ea inset}
.dlg-title{height:31px;flex:none;background:#fff;display:flex;align-items:center;padding:2px 0 0 8px;font-size:12.500px;justify-content:space-between}
.dlg-win{display:flex;align-items:center;padding-right:17px}
.d-min{width:10px;height:1px;background:#111}
.d-max{width:10px;height:10px;border:1px solid #c8c8c8;margin:0 41px 0 35px}
.d-x{width:11px;height:11px}
.dlg-panel{margin:7px 5px 0 6px;height:549px;flex:none;background:#fff;padding:0 0 0 7px}
.dlg-tabs{display:flex;gap:10px;height:30px;font-size:11.800px;letter-spacing:-.5px;padding-top:3px;align-items:flex-start}
.dlg-tabs span{padding:1px 0 5px;height:19px;line-height:12px}
.dlg-tabs .cur{border-bottom:2px solid #2a7a9a}
.dlg-body{display:flex;padding-left:5px}
.grid{width:702px;height:505px;border:1px solid #888;border-bottom-width:2px;flex:none;display:flex;overflow:hidden}
.grid-rows{width:682px;flex:none}
.grow{height:20px;display:grid;grid-template-columns:340px 342px;background:#fff;border-bottom:1px solid #c8c8cb;font-size:12px;letter-spacing:-.45px}
.grow:nth-child(odd){background:#ecebee}
.grow.ghead{height:24px;background:#fff;border-bottom:0}
.grow>span{display:flex;align-items:center;padding:2px 0 0 5px;white-space:nowrap}
.grow>span:first-child{border-right:1px solid #c8c8cb}
.grow>span:last-child{padding-left:3px;letter-spacing:-.2px;font-size:12.500px}
.ghead>span:first-child{padding-left:6px}
.ghead>span:last-child{padding-left:6px}
.grow em,.t-b{width:16px;flex:none}
.t-b{height:14px;margin-right:1px;margin-left:-1px}
.t-s{color:#c89a40;font-size:13px}
.t-i{color:#2f7ba6;font-size:11.500px}
.t-d{color:#2f7ba6;font-size:16px}
.grid-scroll{flex:1;position:relative;background:#f0f0f3;display:flex;flex-direction:column;align-items:center;margin:1px 2px 0 2px}
.grid-scroll .chev{margin:4px 0 2px}
.gthumb{width:100%;height:185px;background:#c9c9cc}
.side-btns{margin-left:8px;width:103px;height:505px;display:flex;flex-direction:column;justify-content:flex-end;gap:10px;padding-bottom:3px}
.btn{height:21px;width:103px;background:#e1e1e4;border:1px solid #adadb0;font-size:13px;flex:none}
.dlg-foot{flex:1;display:flex;gap:7px;justify-content:flex-end;padding:7px 11px 0 0}
.dlg-foot .btn{width:73px}
.btn.ok{border:2px solid #1a78c2}

.toolbox{height:228px;flex:none;margin-top:4px;display:flex;border-top:1px solid #a0a0a3}
.tb-strip{width:14px;flex:none;background:#c5d1e0;position:relative;display:flex;flex-direction:column;align-items:center;padding-top:8px}
.tb-label{position:absolute;bottom:2px;left:0;writing-mode:vertical-rl;transform:rotate(180deg);font:11.500px "Liberation Mono",monospace;letter-spacing:.4px;color:#222}
.tb-main{flex:1;display:flex;flex-direction:column;min-width:0}
.log{flex:1;background:#fff;margin-left:1px}
.lrow{height:20px;display:flex;align-items:center;border-bottom:1px solid #cacaca;font-size:12px}
.lrow.lhead{height:25px;border-bottom:0;font-size:13px;padding-bottom:0}
.lrow.lhead>span{padding-bottom:2px}
.lrow.alt{background:#f0f0f1}
.lrow>span{height:100%;display:flex;align-items:center;white-space:nowrap}
.c-time{width:159px;border-right:1px solid #c4c4c4;padding-left:5px}
.lrow:not(.lhead) .c-time{padding-left:10px;letter-spacing:-.55px}
.c-src{width:180px;border-right:1px solid #c4c4c4;padding-left:7px}
.lrow:not(.lhead) .c-src{padding-left:5px;letter-spacing:-.35px}
.c-msg{flex:1;padding-left:4px;font:11.670px "Liberation Mono",monospace;letter-spacing:0}
.lhead .c-msg{font-size:11.670px;padding-left:6px}
.dot{width:4px;height:4px;border-radius:50%;background:#b4b4b4;margin-right:7px}
.wide-tabs{flex:none;padding-left:5px;border-top:1px solid #111;margin-left:1px;border-bottom:1px solid #a5a5a8;height:26px;align-items:flex-start}
.wide-tabs .tab{margin-top:4px;padding:0 9.800px}
.wide-tabs .tab.on{height:21px;margin-top:-1px;padding:0 9px;background:#fff}
.mail{padding-right:16px}
.mail sub{font-size:9.500px;font-weight:700;color:#d02030;margin-left:3px;letter-spacing:0;position:relative;top:3px;vertical-align:baseline}
.services{margin-left:auto;display:flex;gap:11px;color:#222;padding-right:8px;align-self:center;letter-spacing:-.3px}
.services span{display:flex;align-items:center;gap:4px}
.services .off{color:#b0b0b4}
.si{width:15px;height:15px}

.status{height:21px;flex:none;display:flex;font-size:12.500px}
.st{height:100%;border-left:1px solid #a8a8ac;display:flex;align-items:center;padding:1px 0 0 5px}
.help{width:1210px;border-left:0;padding-left:0}
.st-default{width:295px}
.st-a{width:71px}
.st-b{width:68px}
.st-c{width:70px}
.st-d{width:66px}
.st-net{flex:1;gap:6px}
.netbars{width:14px;height:12px}
```
